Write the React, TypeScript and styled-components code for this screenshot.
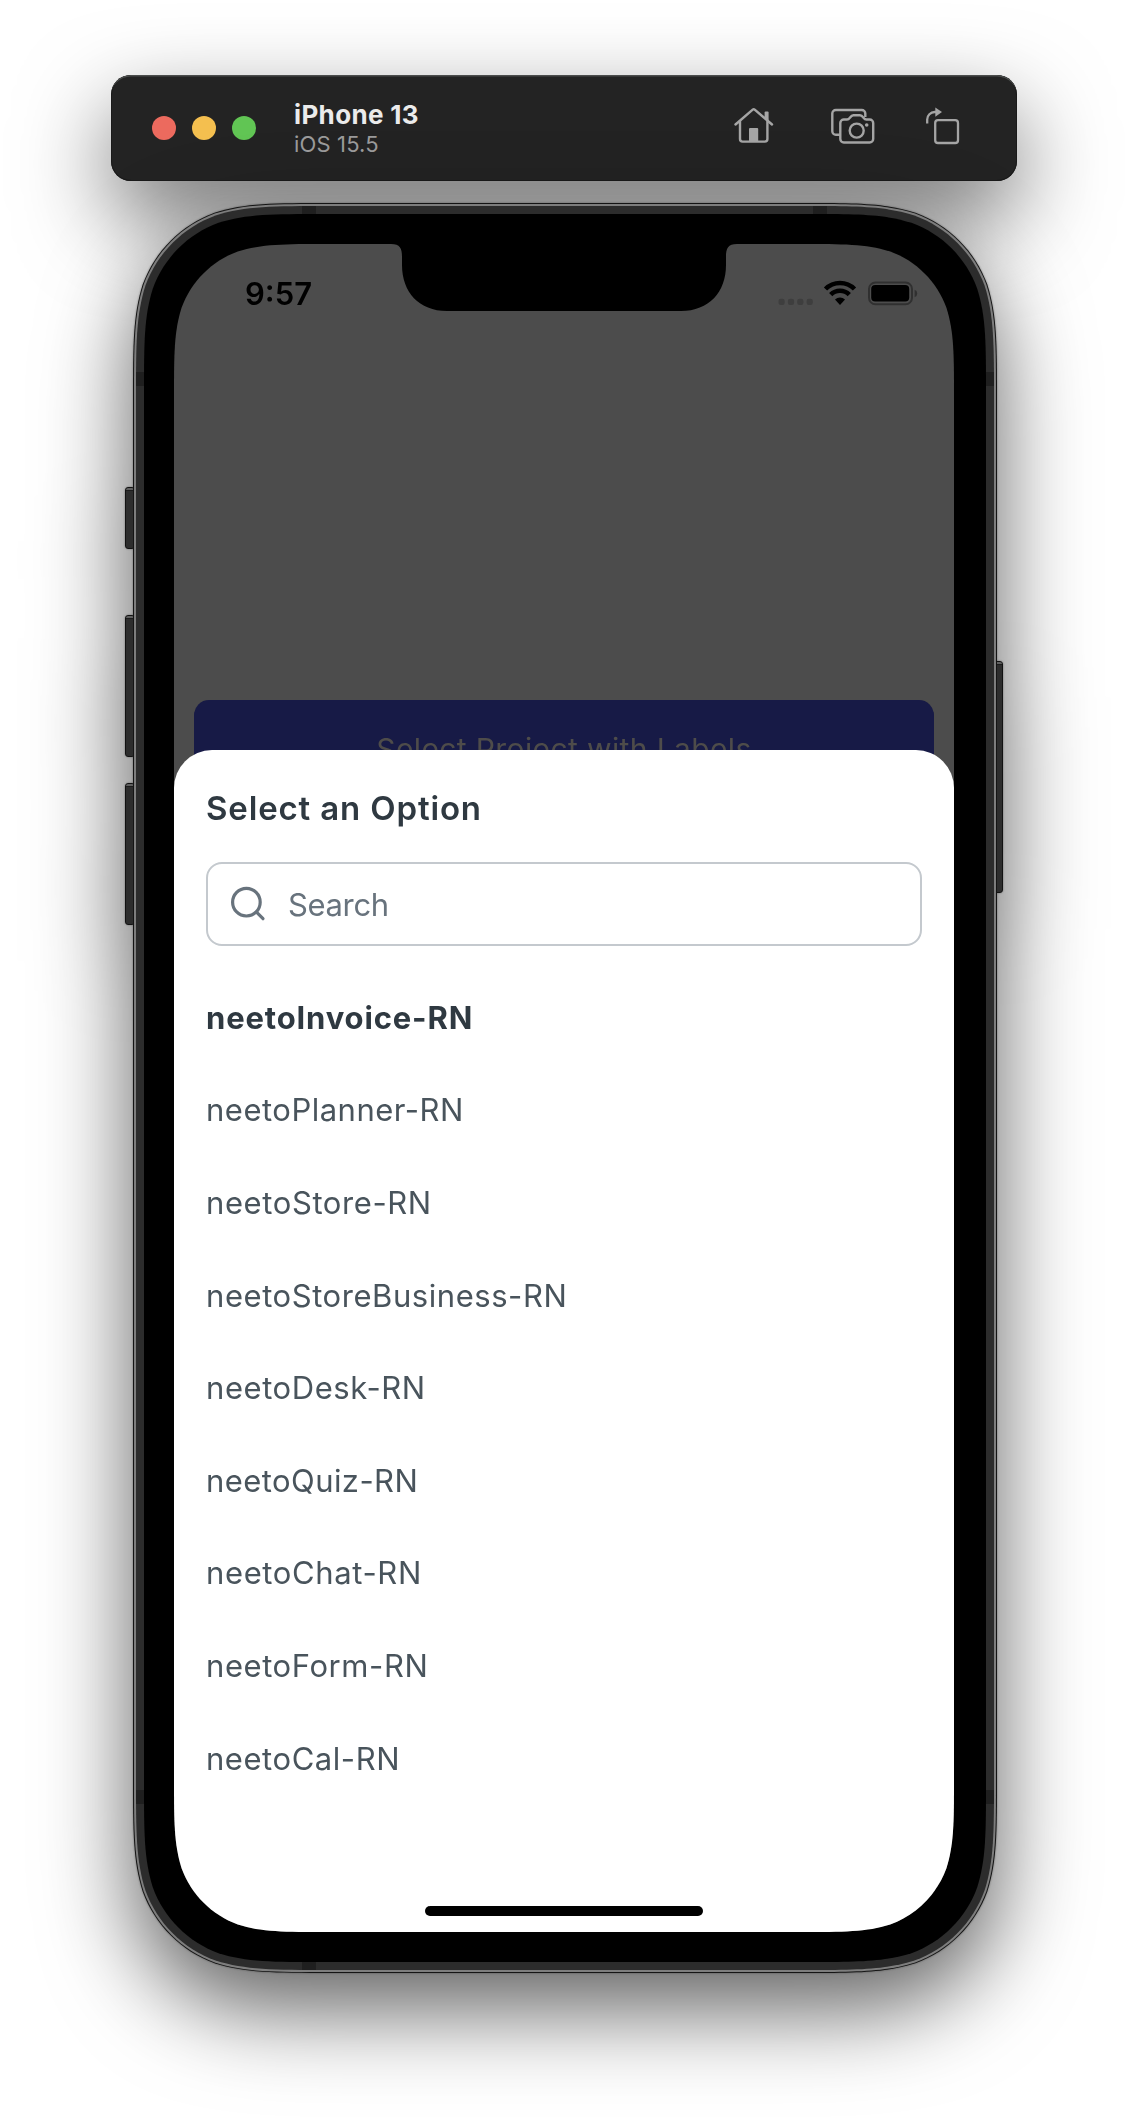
import React from 'react';
import styled, { createGlobalStyle } from 'styled-components';

const GlobalStyle = createGlobalStyle`
  *, *::before, *::after { box-sizing: border-box; }
  html, body { margin: 0; background: #fff; }
  body { font-family: Inter, "Liberation Sans", sans-serif; }
`;

// Rounded rectangle with continuous (smoothed) corners, as a CSS path.
const smoothRect = (w: number, h: number, r: number) => {
  const k = (n: number) => +(n * r).toFixed(2);
  const a = k(1.528665), b = k(1.08849296), c = k(0.86840694), d = k(0.63149379);
  const e = k(0.37282383), f = k(0.16905956), g = k(0.07491139);
  return `path("M${a} 0 L${w - a} 0 C${w - b} 0 ${w - c} 0 ${w - d} ${g} C${w - e} ${f} ${w - f} ${e} ${w - g} ${d} C${w} ${c} ${w} ${b} ${w} ${a} L${w} ${h - a} C${w} ${h - b} ${w} ${h - c} ${w - g} ${h - d} C${w - f} ${h - e} ${w - e} ${h - f} ${w - d} ${h - g} C${w - c} ${h} ${w - b} ${h} ${w - a} ${h} L${a} ${h} C${b} ${h} ${c} ${h} ${d} ${h - g} C${e} ${h - f} ${f} ${h - e} ${g} ${h - d} C0 ${h - c} 0 ${h - b} 0 ${h - a} L0 ${a} C0 ${b} 0 ${c} ${g} ${d} C${f} ${e} ${e} ${f} ${d} ${g} C${c} 0 ${b} 0 ${a} 0 Z")`;
};

const Desktop = styled.main`
  width: 1128px;
  height: 2124px;
  overflow: hidden;
  padding-top: 75px;
  display: flex;
  flex-direction: column;
  align-items: center;
  gap: 22px;
  background: #fff;
`;

const Toolbar = styled.header`
  width: 906px;
  height: 106px;
  flex: none;
  display: flex;
  align-items: center;
  padding: 0 57px 0 41px;
  border-radius: 20px;
  background: #232323;
  box-shadow: inset 0 2px 0 -0.5px #4b4d4c, inset 0 0 0 1px #1a1a1a, 0 36px 90px rgba(0, 0, 0, 0.55);
`;

const Lights = styled.div`
  display: flex;
  gap: 16px;
`;

const Light = styled.span<{ $color: string }>`
  width: 24px;
  height: 24px;
  border-radius: 50%;
  background: ${(p) => p.$color};
`;

const DeviceInfo = styled.div`
  margin-left: 38px;
  padding-top: 1px;
  flex: 1;
`;

const DeviceName = styled.div`
  font-size: 26px;
  line-height: 32px;
  font-weight: 700;
  letter-spacing: 0.35px;
  color: #ebebeb;
`;

const DeviceOs = styled.div`
  font-size: 22px;
  line-height: 27px;
  letter-spacing: 0.15px;
  color: #9b9b9b;
`;

const Tools = styled.div`
  display: flex;
  align-items: center;
  margin-bottom: 4px;
`;

const Phone = styled.div`
  position: relative;
  width: 864px;
  height: 1770px;
  margin-left: 2px;
  flex: none;
  filter: drop-shadow(0 0 1px rgba(0, 0, 0, 0.35)) drop-shadow(0 36px 45px rgba(0, 0, 0, 0.62));
`;

const Shell = styled.div<{ $w: number; $h: number; $r: number; $pad: string; $bg: string }>`
  position: relative;
  width: ${(p) => p.$w}px;
  height: ${(p) => p.$h}px;
  padding: ${(p) => p.$pad};
  background: ${(p) => p.$bg};
  clip-path: ${(p) => smoothRect(p.$w, p.$h, p.$r)};
`;

const Band = styled.span<{ $x: number; $y: number; $vertical?: boolean }>`
  position: absolute;
  left: ${(p) => p.$x}px;
  top: ${(p) => p.$y}px;
  width: ${(p) => (p.$vertical ? 8 : 14)}px;
  height: ${(p) => (p.$vertical ? 14 : 8)}px;
  background: #1f1f1f;
`;

const SideKey = styled.span<{ $side: 'left' | 'right'; $top: number; $h: number }>`
  position: absolute;
  ${(p) => p.$side}: ${(p) => (p.$side === 'left' ? -8 : -6)}px;
  top: ${(p) => p.$top}px;
  width: 10px;
  height: ${(p) => p.$h}px;
  border: 1px solid #121212;
  border-radius: 3px;
  background: linear-gradient(#606060 0 2px, #1c1c1c 2px 3px, #2d2d2d 3px);
`;

const Screen = styled(Shell)`
  display: flex;
  flex-direction: column;
  justify-content: space-between;
`;

const Notch = styled.div`
  position: absolute;
  left: 217px;
  top: 0;
  width: 346px;
  height: 67px;
  background: #000;
  clip-path: path("M0 0H346C337 0 335 4 335 13V21C335 48 318 67 290 67H56C28 67 11 48 11 21V13C11 4 9 0 0 0Z");
`;

const StatusBar = styled.div`
  height: 100px;
  display: flex;
  align-items: center;
  justify-content: space-between;
  padding: 0 36px 0 71px;
`;

const Clock = styled.span`
  font-size: 31px;
  line-height: 36px;
  font-weight: 600;
  color: #000;
`;

const Backdrop = styled.div`
  height: 506px;
`;

const ProjectButton = styled.div`
  height: 96px;
  margin: 356px 20px 0;
  border-radius: 15px;
  background: #171a46;
  color: #4e4c4a;
  text-align: center;
  font-size: 30px;
  line-height: 98px;
  letter-spacing: 0.38px;
`;

const Sheet = styled.section`
  position: relative;
  height: 1182px;
  padding: 36px 32px 16px;
  display: flex;
  flex-direction: column;
  border-radius: 38px 38px 0 0;
  background: #fff;
`;

const SheetTitle = styled.h1`
  margin: 0;
  font-size: 33px;
  line-height: 44px;
  font-weight: 600;
  letter-spacing: 0.85px;
  color: #2f3941;
`;

const SearchBox = styled.div`
  height: 84px;
  margin-top: 32px;
  display: flex;
  align-items: center;
  gap: 20px;
  padding-left: 22px;
  border: 2px solid #c4c9ce;
  border-radius: 16px;
  color: #68737d;
  font-size: 31px;
  letter-spacing: -0.35px;
`;

const OptionList = styled.ul`
  list-style: none;
  margin: 25.8px 0 0;
  padding: 0;
  flex: 1;
`;

const Option = styled.li<{ $selected?: boolean; $tracking: number }>`
  height: 92.6px;
  line-height: 92.6px;
  font-size: 31px;
  font-weight: ${(p) => (p.$selected ? 700 : 400)};
  letter-spacing: ${(p) => p.$tracking}px;
  color: ${(p) => (p.$selected ? '#2f3941' : '#49545c')};
`;

const HomeIndicator = styled.div`
  width: 278px;
  height: 10px;
  flex: none;
  align-self: center;
  border-radius: 5px;
  background: #000;
`;

const HomeIcon = () => (
  <svg width="40" height="38" viewBox="0 0 40 38" fill="none" stroke="#a5a5a5" strokeWidth="2.400" strokeLinecap="round" strokeLinejoin="round">
    <path d="M1.500 17.500 18.700 2.600a1.600 1.600 0 0 1 2 0L38 17.500" />
    <path d="M6 14.500V32a2.600 2.600 0 0 0 2.600 2.600h22.200a2.600 2.600 0 0 0 2.600-2.600V14.500" />
    <path d="M30.600 5.500a1 1 0 0 1 1-1h2a1 1 0 0 1 1 1V14.500L30.600 11Z" fill="#a5a5a5" stroke="none" />
    <path d="M15 35V22a1 1 0 0 1 1-1h7.200a1 1 0 0 1 1 1V35Z" fill="#a5a5a5" stroke="none" />
  </svg>
);

const CameraIcon = () => (
  <svg width="44" height="36" viewBox="0 0 44 36" fill="none" stroke="#a5a5a5" strokeWidth="2.400" strokeLinejoin="round">
    <path d="M9 26.800H4.800a3.500 3.500 0 0 1-3.500-3.500V5.500A3.500 3.500 0 0 1 4.800 2h26a3.500 3.500 0 0 1 3.500 3.500V9" />
    <path d="M12.600 11.500H16c3.200 0 3-4.200 6.400-4.200h6.600c3.400 0 3.200 4.200 6.400 4.200h3.300a3.500 3.500 0 0 1 3.500 3.500V31a3.500 3.500 0 0 1-3.500 3.500H12.800A3.500 3.500 0 0 1 9.300 31V15a3.500 3.500 0 0 1 3.500-3.500Z" />
    <circle cx="25.700" cy="22.600" r="7" />
    <circle cx="35.700" cy="17" r="1.800" fill="#a5a5a5" stroke="none" />
  </svg>
);

const RotateIcon = () => (
  <svg width="34" height="38" viewBox="0 0 34 38" fill="none" stroke="#a5a5a5" strokeWidth="2.300">
    <rect x="9.200" y="13.200" width="22.800" height="22.800" rx="2.800" />
    <path d="M1.200 16.500V12.500a7.500 7.500 0 0 1 7.500-7.500H10" />
    <path d="M9.300 0.500v9.200L16 5Z" fill="#a5a5a5" stroke="none" />
  </svg>
);

const ToolSlot = styled.span<{ $ml: number }>`
  display: flex;
  margin-left: ${(p) => p.$ml}px;
`;

const StatusIcons = () => (
  <svg width="140" height="28" viewBox="0 0 140 28">
    <g fill="#3e3e3e">
      <rect x="0.500" y="18.700" width="6.200" height="6.200" rx="2.200" />
      <rect x="9.900" y="18.700" width="6.200" height="6.200" rx="2.200" />
      <rect x="19.200" y="18.700" width="6.200" height="6.200" rx="2.200" />
      <rect x="28.600" y="18.700" width="6.200" height="6.200" rx="2.200" />
    </g>
    <g fill="none" stroke="#000" strokeWidth="4.600">
      <path d="M47.500 9a20.400 20.400 0 0 1 29 0" />
      <path d="M52.700 14.600a13.200 13.200 0 0 1 18.600 0" />
    </g>
    <path d="M57 19.600a7.200 7.200 0 0 1 10 0L62 24.900Z" fill="#000" />
    <rect x="91" y="2.500" width="43" height="21.800" rx="6.500" fill="none" stroke="#303030" strokeWidth="2" />
    <rect x="93.200" y="5.100" width="38" height="16.400" rx="4" fill="#000" />
    <path d="M136.600 9.700q2.600.8 2.600 3.800t-2.600 3.800Z" fill="#303030" />
  </svg>
);

const SearchIcon = () => (
  <svg width="38" height="38" viewBox="0 0 38 38" fill="none" stroke="#68737d" strokeWidth="3.200" strokeLinecap="round">
    <circle cx="16.400" cy="17.200" r="13.800" />
    <path d="M26.500 27.200 33 33.700" />
  </svg>
);

const options = [
  { name: 'neetoInvoice-RN', tracking: 0.85 },
  { name: 'neetoPlanner-RN', tracking: 0.5 },
  { name: 'neetoStore-RN', tracking: 0.6 },
  { name: 'neetoStoreBusiness-RN', tracking: 0.56 },
  { name: 'neetoDesk-RN', tracking: 0.57 },
  { name: 'neetoQuiz-RN', tracking: 0.43 },
  { name: 'neetoChat-RN', tracking: 0.63 },
  { name: 'neetoForm-RN', tracking: 0.58 },
  { name: 'neetoCal-RN', tracking: 0.55 },
];

export default function App() {
  return (
    <>
      <GlobalStyle />
      <Desktop>
        <Toolbar>
          <Lights>
            <Light $color="#ec6a5e" />
            <Light $color="#f4bf4f" />
            <Light $color="#61c554" />
          </Lights>
          <DeviceInfo>
            <DeviceName>iPhone 13</DeviceName>
            <DeviceOs>iOS 15.5</DeviceOs>
          </DeviceInfo>
          <Tools>
            <ToolSlot $ml={0}><HomeIcon /></ToolSlot>
            <ToolSlot $ml={57}><CameraIcon /></ToolSlot>
            <ToolSlot $ml={51}><RotateIcon /></ToolSlot>
          </Tools>
        </Toolbar>
        <Phone>
          <SideKey $side="left" $top={284} $h={62} />
          <SideKey $side="left" $top={412} $h={142} />
          <SideKey $side="left" $top={580} $h={142} />
          <SideKey $side="right" $top={458} $h={232} />
          <Shell $w={864} $h={1770} $r={129} $pad="1px" $bg="#141414">
            <Shell $w={862} $h={1768} $r={128} $pad="2px" $bg="#7d7d7d">
              <Shell $w={858} $h={1764} $r={126} $pad="8px" $bg="#2c2c2c">
                <Band $x={166} $y={0} />
                <Band $x={677} $y={0} />
                <Band $x={166} $y={1756} />
                <Band $x={0} $y={166} $vertical />
                <Band $x={850} $y={166} $vertical />
                <Band $x={0} $y={1584} $vertical />
                <Band $x={850} $y={1584} $vertical />
                <Shell $w={842} $h={1748} $r={118} $pad="30px 32px 30px 30px" $bg="#000">
                  <Screen $w={780} $h={1688} $r={101} $pad="0" $bg="#4c4c4c">
                    <Backdrop>
                      <StatusBar>
                        <Clock>9:57</Clock>
                        <StatusIcons />
                      </StatusBar>
                      <ProjectButton>Select Project with Labels</ProjectButton>
                    </Backdrop>
                    <Notch />
                    <Sheet>
                      <SheetTitle>Select an Option</SheetTitle>
                      <SearchBox>
                        <SearchIcon />
                        Search
                      </SearchBox>
                      <OptionList>
                        {options.map((o, i) => (
                          <Option key={o.name} $selected={i === 0} $tracking={o.tracking}>{o.name}</Option>
                        ))}
                      </OptionList>
                      <HomeIndicator />
                    </Sheet>
                  </Screen>
                </Shell>
              </Shell>
            </Shell>
          </Shell>
        </Phone>
      </Desktop>
    </>
  );
}
